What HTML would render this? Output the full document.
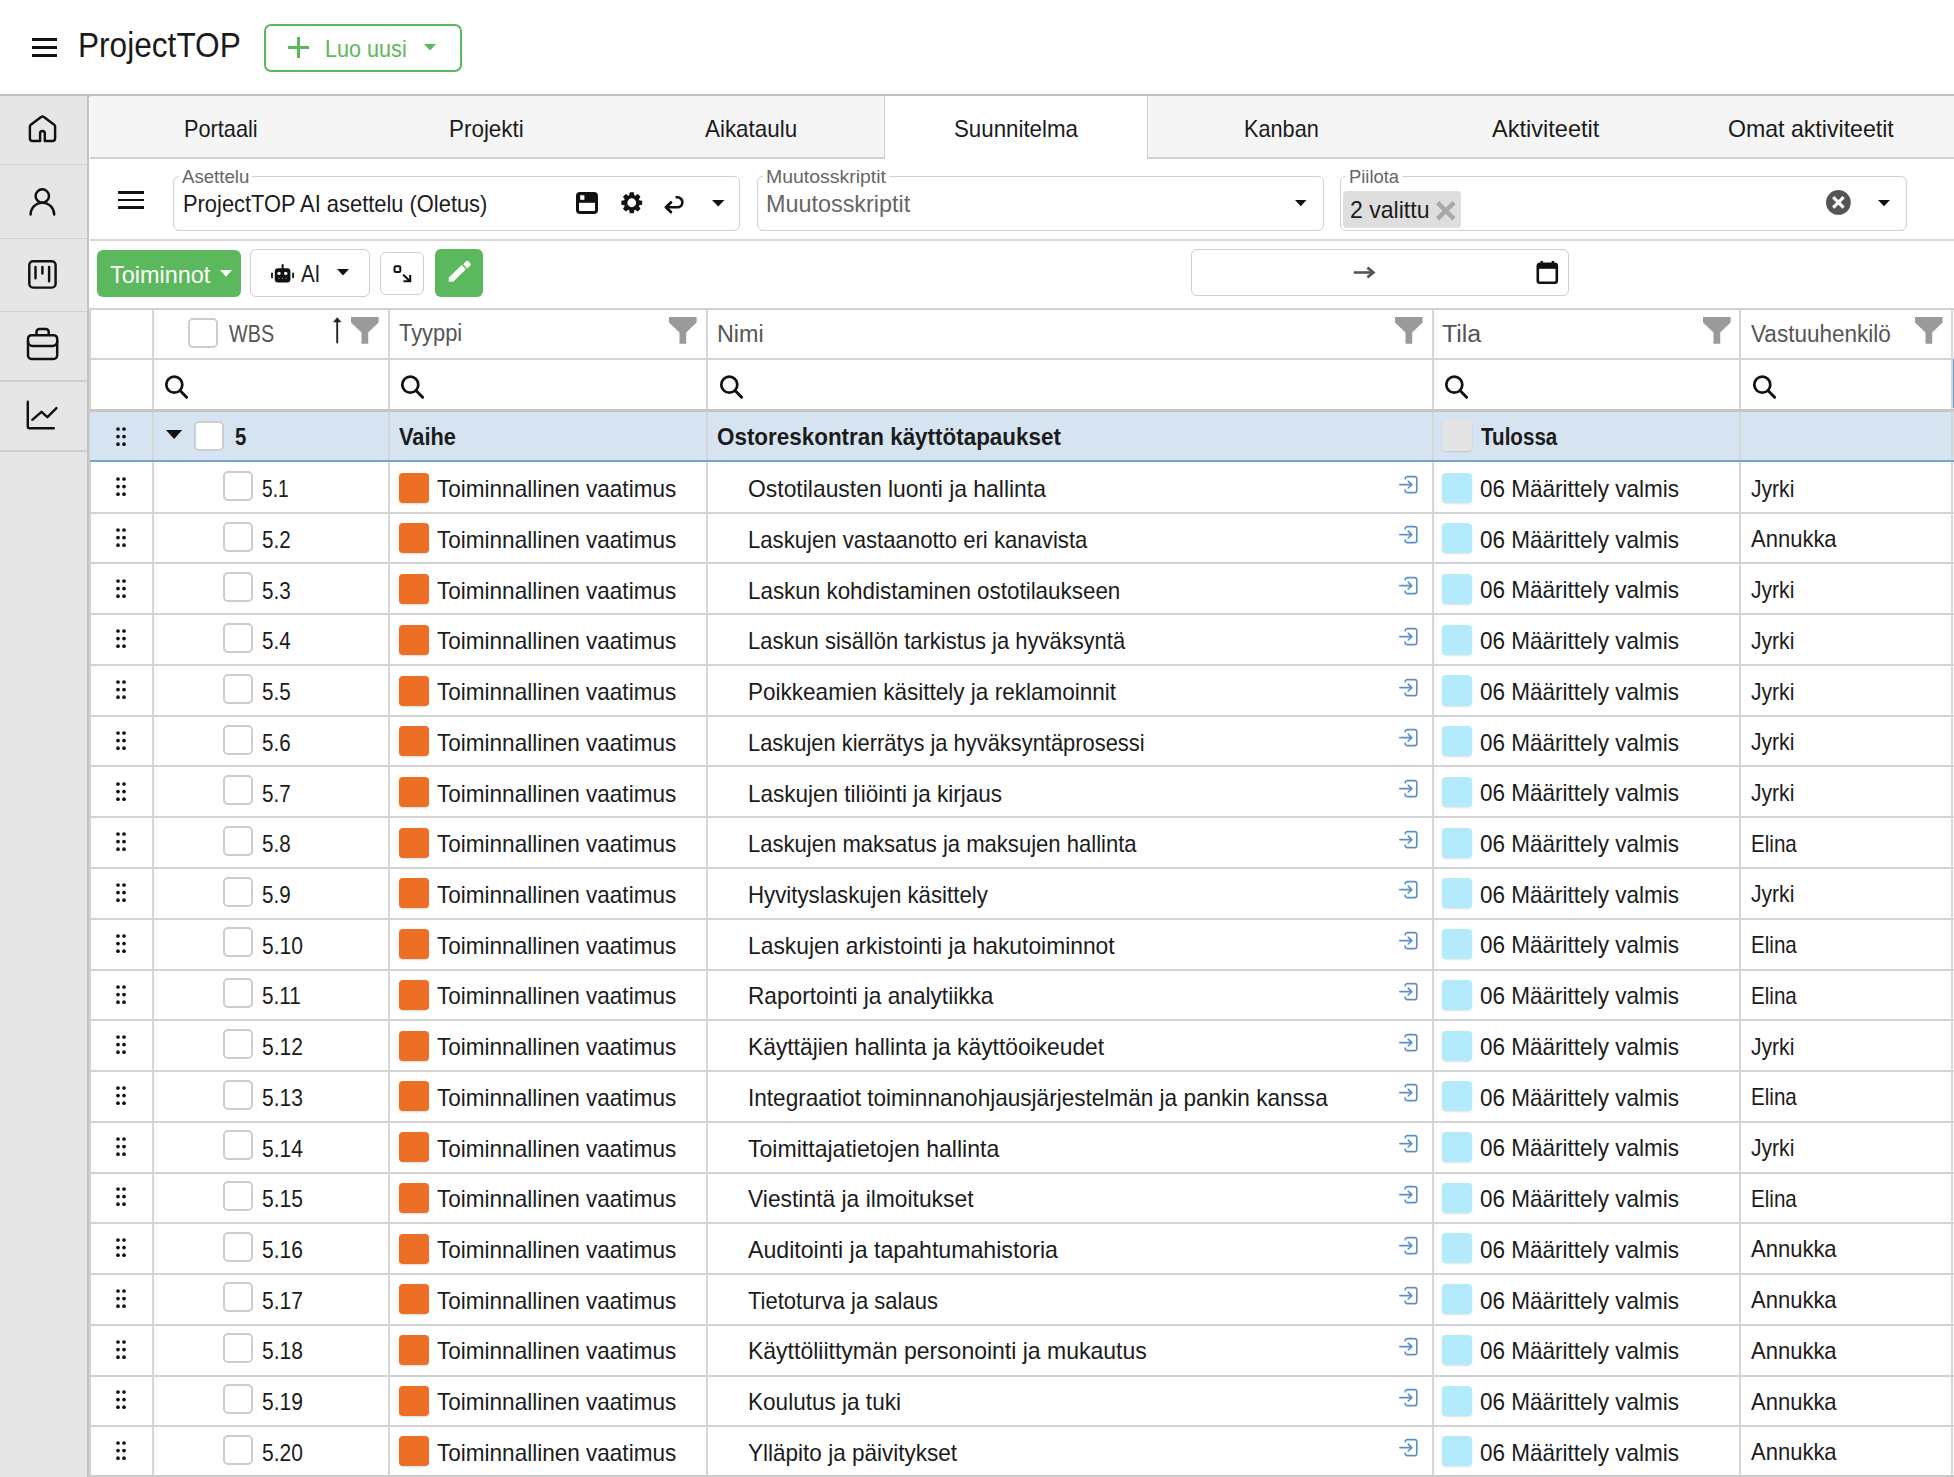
<!DOCTYPE html>
<html><head><meta charset="utf-8"><title>ProjectTOP</title>
<style>
html,body{margin:0;padding:0;}
body{width:1954px;height:1477px;position:relative;overflow:hidden;background:#fff;font-family:"Liberation Sans",sans-serif;}
.a{position:absolute;}
.t{position:absolute;white-space:nowrap;transform-origin:0 50%;}
svg{overflow:visible;}
</style></head><body>
<div class="a" style="left:31.50px;top:38.00px;width:25.50px;height:3.30px;background:#111;"></div>
<div class="a" style="left:31.50px;top:45.80px;width:25.50px;height:3.30px;background:#111;"></div>
<div class="a" style="left:31.50px;top:53.60px;width:25.50px;height:3.30px;background:#111;"></div>
<div class="t" style="left:77.50px;top:28.39px;font-size:34.5px;line-height:34.5px;color:#1b1b1b;transform:scaleX(0.9162);">ProjectTOP</div>
<div class="a" style="left:264.00px;top:24.00px;width:198.00px;height:48.00px;border:2px solid #5cb85c;border-radius:7px;box-sizing:border-box;"></div>
<div class="a" style="left:296.50px;top:36.50px;width:3.00px;height:21.00px;background:#5cb85c;"></div>
<div class="a" style="left:287.50px;top:45.50px;width:21.00px;height:3.00px;background:#5cb85c;"></div>
<div class="t" style="left:325.30px;top:37.28px;font-size:24px;line-height:24px;color:#5cb85c;transform:scaleX(0.9008);">Luo uusi</div>
<svg class="a" style="left:423.50px;top:43.50px" width="12" height="7" viewBox="0 0 12 7"><path d="M0 0H12L6 6.5Z" fill="#5cb85c"/></svg>
<div class="a" style="left:0.00px;top:94.00px;width:1954.00px;height:2.60px;background:#c0c0c0;"></div>
<div class="a" style="left:0.00px;top:96.20px;width:87.00px;height:1381.00px;background:#e6e6e6;"></div>
<div class="a" style="left:86.80px;top:96.20px;width:2.50px;height:1381.00px;background:#c4c4c4;"></div>
<div class="a" style="left:89.20px;top:308.00px;width:1.40px;height:1169.00px;background:#d2d2d2;"></div>
<div class="a" style="left:0.00px;top:163.50px;width:87.00px;height:1.60px;background:#cfcfcf;"></div>
<div class="a" style="left:0.00px;top:237.80px;width:87.00px;height:1.60px;background:#cfcfcf;"></div>
<div class="a" style="left:0.00px;top:310.50px;width:87.00px;height:1.60px;background:#cfcfcf;"></div>
<div class="a" style="left:0.00px;top:380.20px;width:87.00px;height:1.60px;background:#cfcfcf;"></div>
<div class="a" style="left:0.00px;top:450.00px;width:87.00px;height:1.60px;background:#cfcfcf;"></div>
<svg class="a" style="left:20.00px;top:105.00px" width="45" height="45" viewBox="0 0 45 45"><path fill="none" stroke="#111" stroke-width="2.45" stroke-linecap="round" stroke-linejoin="round" d="M20.1 36 V28.3 a2.35 2.35 0 0 1 4.7 0 V36 H32.3 a2.8 2.8 0 0 0 2.8 -2.8 V21.6 a2.2 2.2 0 0 0 -0.9 -1.8 L23.9 12.1 a2.2 2.2 0 0 0 -2.8 0 L10.8 19.8 a2.2 2.2 0 0 0 -0.9 1.8 V33.2 a2.8 2.8 0 0 0 2.8 2.8 Z"/></svg>
<svg class="a" style="left:20.00px;top:180.00px" width="45" height="45" viewBox="0 0 45 45"><circle cx="22.3" cy="16" r="6.7" fill="none" stroke="#111" stroke-width="2.45" stroke-linecap="round" stroke-linejoin="round"/><path fill="none" stroke="#111" stroke-width="2.45" stroke-linecap="round" stroke-linejoin="round" d="M10.6 34.5 A11.8 11.8 0 0 1 34.2 34.5"/></svg>
<svg class="a" style="left:20.00px;top:250.00px" width="45" height="45" viewBox="0 0 45 45"><rect x="9.3" y="11.3" width="26.3" height="26.3" rx="3.8" fill="none" stroke="#111" stroke-width="2.45" stroke-linecap="round" stroke-linejoin="round"/><path fill="none" stroke="#111" stroke-width="2.45" stroke-linecap="round" stroke-linejoin="round" d="M15.5 17V28.3 M22.4 17V23.5 M29.1 17V31.3"/></svg>
<svg class="a" style="left:20.00px;top:322.00px" width="45" height="45" viewBox="0 0 45 45"><path fill="none" stroke="#111" stroke-width="2.45" stroke-linecap="round" stroke-linejoin="round" d="M16.5 12 V9.8 a2.8 2.8 0 0 1 2.8 -2.8 H25.9 a2.8 2.8 0 0 1 2.8 2.8 V12"/><rect x="8" y="13.2" width="29.2" height="23.8" rx="3.5" fill="none" stroke="#111" stroke-width="2.45" stroke-linecap="round" stroke-linejoin="round"/><path fill="none" stroke="#111" stroke-width="2.45" stroke-linecap="round" stroke-linejoin="round" d="M8 19.5 a4.5 4.5 0 0 0 4.5 4.5 H32.7 a4.5 4.5 0 0 0 4.5 -4.5"/></svg>
<svg class="a" style="left:20.00px;top:393.00px" width="45" height="45" viewBox="0 0 45 45"><path fill="none" stroke="#111" stroke-width="2.45" stroke-linecap="round" stroke-linejoin="round" d="M7.8 8.8 V33.5 a1.8 1.8 0 0 0 1.8 1.8 H33.8"/><path fill="none" stroke="#111" stroke-width="2.45" stroke-linecap="round" stroke-linejoin="round" d="M12.3 26.8 L21.5 18.8 L27.4 24.1 L36.4 15.1"/></svg>
<div class="a" style="left:89.60px;top:96.20px;width:1864.40px;height:61.80px;background:#f5f5f5;"></div>
<div class="a" style="left:89.60px;top:157.20px;width:1864.40px;height:1.80px;background:#d2d2d2;"></div>
<div class="a" style="left:884.00px;top:96.20px;width:263.50px;height:63.00px;background:#fff;border-left:1.6px solid #d2d2d2;border-right:1.6px solid #d2d2d2;box-sizing:border-box;"></div>
<div class="t" style="left:183.80px;top:117.08px;font-size:24px;line-height:24px;color:#1b1b1b;transform:scaleX(0.9054);">Portaali</div>
<div class="t" style="left:448.90px;top:117.08px;font-size:24px;line-height:24px;color:#1b1b1b;transform:scaleX(0.9338);">Projekti</div>
<div class="t" style="left:704.60px;top:117.08px;font-size:24px;line-height:24px;color:#1b1b1b;transform:scaleX(0.9331);">Aikataulu</div>
<div class="t" style="left:953.50px;top:117.08px;font-size:24px;line-height:24px;color:#1b1b1b;transform:scaleX(0.9288);">Suunnitelma</div>
<div class="t" style="left:1243.50px;top:117.08px;font-size:24px;line-height:24px;color:#1b1b1b;transform:scaleX(0.9034);">Kanban</div>
<div class="t" style="left:1492.30px;top:117.08px;font-size:24px;line-height:24px;color:#1b1b1b;transform:scaleX(0.9817);">Aktiviteetit</div>
<div class="t" style="left:1728.00px;top:117.08px;font-size:24px;line-height:24px;color:#1b1b1b;transform:scaleX(0.9634);">Omat aktiviteetit</div>
<div class="a" style="left:89.60px;top:239.20px;width:1864.40px;height:1.70px;background:#d6d6d6;"></div>
<div class="a" style="left:118.00px;top:190.80px;width:25.50px;height:2.90px;background:#111;"></div>
<div class="a" style="left:118.00px;top:198.60px;width:25.50px;height:2.90px;background:#111;"></div>
<div class="a" style="left:118.00px;top:206.30px;width:25.50px;height:2.90px;background:#111;"></div>
<div class="a" style="left:173.00px;top:176.00px;width:567.00px;height:55.00px;border:1.5px solid #d0d0d0;border-radius:6px;box-sizing:border-box;"></div>
<div class="a" style="left:179.00px;top:172.00px;width:73.40px;height:8.00px;background:#fff;"></div>
<div class="t" style="left:182.00px;top:166.91px;font-size:19px;line-height:19px;color:#666;transform:scaleX(0.9811);">Asettelu</div>
<div class="a" style="left:756.50px;top:176.00px;width:567.00px;height:55.00px;border:1.5px solid #d0d0d0;border-radius:6px;box-sizing:border-box;"></div>
<div class="a" style="left:762.70px;top:172.00px;width:126.00px;height:8.00px;background:#fff;"></div>
<div class="t" style="left:765.70px;top:166.91px;font-size:19px;line-height:19px;color:#666;transform:scaleX(1.0239);">Muutosskriptit</div>
<div class="a" style="left:1339.60px;top:176.00px;width:567.20px;height:55.00px;border:1.5px solid #d0d0d0;border-radius:6px;box-sizing:border-box;"></div>
<div class="a" style="left:1346.00px;top:172.00px;width:56.00px;height:8.00px;background:#fff;"></div>
<div class="t" style="left:1349.00px;top:166.91px;font-size:19px;line-height:19px;color:#666;transform:scaleX(0.9653);">Piilota</div>
<div class="t" style="left:182.60px;top:191.78px;font-size:24px;line-height:24px;color:#1b1b1b;transform:scaleX(0.9114);">ProjectTOP AI asettelu (Oletus)</div>
<div class="t" style="left:765.70px;top:191.68px;font-size:24px;line-height:24px;color:#666;transform:scaleX(0.9743);">Muutosskriptit</div>
<svg class="a" style="left:576.00px;top:192.00px" width="22" height="22" viewBox="0 0 22 22"><rect x="1.5" y="1.5" width="19" height="19" rx="2.5" fill="none" stroke="#111" stroke-width="3"/><rect x="1.5" y="1.5" width="19" height="9.3" fill="#111"/><rect x="4.2" y="3.2" width="4.2" height="4.6" fill="#fff"/></svg>
<svg class="a" style="left:621.00px;top:192.30px" width="21.5" height="21.5" viewBox="0 0 21.5 21.5"><path d="M21.16 8.75 L21.16 12.75 L18.22 13.31 L17.84 14.22 L19.53 16.69 L16.69 19.53 L14.22 17.84 L13.31 18.22 L12.75 21.16 L8.75 21.16 L8.19 18.22 L7.28 17.84 L4.81 19.53 L1.97 16.69 L3.66 14.22 L3.28 13.31 L0.34 12.75 L0.34 8.75 L3.28 8.19 L3.66 7.28 L1.97 4.81 L4.81 1.97 L7.28 3.66 L8.19 3.28 L8.75 0.34 L12.75 0.34 L13.31 3.28 L14.22 3.66 L16.69 1.97 L19.53 4.81 L17.84 7.28 L18.22 8.19Z M15.15 10.75 A4.4 4.4 0 1 0 6.35 10.75 A4.4 4.4 0 1 0 15.15 10.75Z" fill="#111" fill-rule="evenodd"/></svg>
<svg class="a" style="left:663.00px;top:195.00px" width="24" height="20" viewBox="0 0 24 20"><path d="M3.4 12.3 H14.4 a5 5 0 0 0 0 -10 H13.6" fill="none" stroke="#111" stroke-width="2.6" stroke-linecap="round"/><path d="M7.9 7.5 L2.9 12.3 L7.9 17.1" fill="none" stroke="#111" stroke-width="2.8" stroke-linecap="round" stroke-linejoin="round"/></svg>
<svg class="a" style="left:711.80px;top:199.60px" width="12.5" height="7" viewBox="0 0 12.5 7"><path d="M0 0H12.5L6.25 6.4Z" fill="#111"/></svg>
<svg class="a" style="left:1295.00px;top:199.80px" width="11.5" height="6.5" viewBox="0 0 11.5 6.5"><path d="M0 0H11.5L5.75 6.2Z" fill="#111"/></svg>
<div class="a" style="left:1343.00px;top:191.20px;width:118.30px;height:36.50px;background:#dedede;border-radius:4px;"></div>
<div class="t" style="left:1349.50px;top:197.68px;font-size:24px;line-height:24px;color:#1b1b1b;transform:scaleX(0.9613);">2 valittu</div>
<svg class="a" style="left:1436.30px;top:200.80px" width="20" height="20" viewBox="0 0 20 20"><path d="M1.6 1.6L17.9 17.9M17.9 1.6L1.6 17.9" stroke="#a8a8a8" stroke-width="4.4" stroke-linecap="butt"/></svg>
<svg class="a" style="left:1826.10px;top:190.30px" width="25" height="25" viewBox="0 0 25 25"><circle cx="12.4" cy="12.4" r="12.4" fill="#555"/><path d="M7.2 7.2L17.6 17.6M17.6 7.2L7.2 17.6" stroke="#fff" stroke-width="3.2" stroke-linecap="butt"/></svg>
<svg class="a" style="left:1878.00px;top:199.50px" width="12" height="6.5" viewBox="0 0 12 6.5"><path d="M0 0H12L6 6.3Z" fill="#111"/></svg>
<div class="a" style="left:97.00px;top:250.00px;width:144.00px;height:47.00px;background:#5cb85c;border-radius:6px;"></div>
<div class="t" style="left:110.00px;top:263.18px;font-size:24px;line-height:24px;color:#fff;transform:scaleX(0.9766);">Toiminnot</div>
<svg class="a" style="left:220.00px;top:269.70px" width="12" height="7" viewBox="0 0 12 7"><path d="M0 0H12L6 6.8Z" fill="#fff"/></svg>
<div class="a" style="left:250.40px;top:249.00px;width:120.00px;height:47.60px;border:1.5px solid #cfcfcf;border-radius:6px;box-sizing:border-box;"></div>
<svg class="a" style="left:270.00px;top:263.00px" width="25" height="21" viewBox="0 0 25 21"><rect x="4.8" y="5.2" width="15.6" height="14.2" rx="3.2" fill="#111"/><rect x="11.6" y="1" width="2" height="5" rx="1" fill="#111"/><rect x="1.1" y="9.6" width="1.8" height="5.7" rx=".9" fill="#111"/><rect x="22.2" y="9.6" width="1.8" height="5.7" rx=".9" fill="#111"/><circle cx="9" cy="10.4" r="1.7" fill="#fff"/><circle cx="15.7" cy="10.4" r="1.7" fill="#fff"/><circle cx="9" cy="15.3" r=".7" fill="#888"/><circle cx="12.5" cy="15.3" r=".7" fill="#888"/><circle cx="16" cy="15.3" r=".7" fill="#888"/></svg>
<div class="t" style="left:301.20px;top:261.68px;font-size:24px;line-height:24px;color:#1b1b1b;transform:scaleX(0.8502);">AI</div>
<svg class="a" style="left:337.00px;top:269.30px" width="12" height="7" viewBox="0 0 12 7"><path d="M0 0H12L6 6.6Z" fill="#111"/></svg>
<div class="a" style="left:380.40px;top:251.70px;width:43.20px;height:43.10px;border:1.5px solid #cfcfcf;border-radius:6px;box-sizing:border-box;"></div>
<svg class="a" style="left:390.00px;top:262.00px" width="25" height="24" viewBox="0 0 25 24"><rect x="4.5" y="4.2" width="5.8" height="5.8" rx="1.2" fill="none" stroke="#111" stroke-width="2"/><path d="M13.8 13.2 L19.6 19" stroke="#111" stroke-width="2.1" stroke-linecap="round"/><path d="M13.5 19.3 H20.2 V13" fill="none" stroke="#111" stroke-width="2.1"/></svg>
<div class="a" style="left:435.00px;top:248.60px;width:48.00px;height:48.00px;background:#5cb85c;border-radius:6px;"></div>
<svg class="a" style="left:446.00px;top:259.00px" width="28" height="26" viewBox="0 0 28 26"><path d="M2.7 22.7 L2.9 18.4 L15.6 5.9 L19.9 10.2 L7.2 22.7 Z" fill="#fff"/><path d="M17.2 5.3 L20.4 2.1 a1.3 1.3 0 0 1 1.8 0 L24.5 4.4 a1.3 1.3 0 0 1 0 1.8 L21.3 9.4 Z" fill="#fff"/></svg>
<div class="a" style="left:1191.30px;top:248.60px;width:377.70px;height:47.70px;border:1.5px solid #cfcfcf;border-radius:6px;box-sizing:border-box;"></div>
<svg class="a" style="left:1352.00px;top:265.00px" width="25" height="15" viewBox="0 0 25 15"><path d="M1.8 7.5H20" stroke="#555" stroke-width="2.6"/><path d="M15.4 2.6L21.4 7.5L15.4 12.4" fill="none" stroke="#555" stroke-width="2.7" stroke-linejoin="miter"/></svg>
<svg class="a" style="left:1535.00px;top:259.50px" width="25" height="25" viewBox="0 0 25 25"><rect x="2.8" y="3.8" width="19" height="19" rx="2" fill="none" stroke="#111" stroke-width="2.6"/><rect x="2.8" y="3.8" width="19" height="5" fill="#111"/><rect x="5.5" y="1" width="2.4" height="4" fill="#111"/><rect x="16.7" y="1" width="2.4" height="4" fill="#111"/></svg>
<div class="a" style="left:89.60px;top:308.00px;width:1864.40px;height:2.00px;background:#d2d2d2;"></div>
<div class="a" style="left:89.60px;top:411.00px;width:1864.40px;height:50.00px;background:#d6e4f1;"></div>
<div class="a" style="left:152.00px;top:308.00px;width:2.00px;height:1169.00px;background:#d6d6d6;"></div>
<div class="a" style="left:388.00px;top:308.00px;width:2.00px;height:1169.00px;background:#d6d6d6;"></div>
<div class="a" style="left:706.00px;top:308.00px;width:2.00px;height:1169.00px;background:#d6d6d6;"></div>
<div class="a" style="left:1432.00px;top:308.00px;width:2.00px;height:1169.00px;background:#d6d6d6;"></div>
<div class="a" style="left:1739.00px;top:308.00px;width:2.00px;height:1169.00px;background:#d6d6d6;"></div>
<div class="a" style="left:1951.00px;top:308.00px;width:2.00px;height:1169.00px;background:#d6d6d6;"></div>
<div class="a" style="left:89.60px;top:358.00px;width:1864.40px;height:2.00px;background:#d2d2d2;"></div>
<div class="a" style="left:89.60px;top:409.00px;width:1864.40px;height:3.00px;background:#c6c6c6;"></div>
<div class="a" style="left:89.60px;top:460.00px;width:1864.40px;height:2.00px;background:#76a4d2;"></div>
<div class="a" style="left:1952.60px;top:359.00px;width:1.60px;height:49.00px;background:#6a9bd0;"></div>
<div class="a" style="left:89.60px;top:512.00px;width:1864.40px;height:2.00px;background:#d2d2d2;"></div>
<div class="a" style="left:89.60px;top:562.00px;width:1864.40px;height:2.00px;background:#d2d2d2;"></div>
<div class="a" style="left:89.60px;top:613.00px;width:1864.40px;height:2.00px;background:#d2d2d2;"></div>
<div class="a" style="left:89.60px;top:664.00px;width:1864.40px;height:2.00px;background:#d2d2d2;"></div>
<div class="a" style="left:89.60px;top:715.00px;width:1864.40px;height:2.00px;background:#d2d2d2;"></div>
<div class="a" style="left:89.60px;top:765.00px;width:1864.40px;height:2.00px;background:#d2d2d2;"></div>
<div class="a" style="left:89.60px;top:816.00px;width:1864.40px;height:2.00px;background:#d2d2d2;"></div>
<div class="a" style="left:89.60px;top:867.00px;width:1864.40px;height:2.00px;background:#d2d2d2;"></div>
<div class="a" style="left:89.60px;top:918.00px;width:1864.40px;height:2.00px;background:#d2d2d2;"></div>
<div class="a" style="left:89.60px;top:969.00px;width:1864.40px;height:2.00px;background:#d2d2d2;"></div>
<div class="a" style="left:89.60px;top:1019.00px;width:1864.40px;height:2.00px;background:#d2d2d2;"></div>
<div class="a" style="left:89.60px;top:1070.00px;width:1864.40px;height:2.00px;background:#d2d2d2;"></div>
<div class="a" style="left:89.60px;top:1121.00px;width:1864.40px;height:2.00px;background:#d2d2d2;"></div>
<div class="a" style="left:89.60px;top:1172.00px;width:1864.40px;height:2.00px;background:#d2d2d2;"></div>
<div class="a" style="left:89.60px;top:1222.00px;width:1864.40px;height:2.00px;background:#d2d2d2;"></div>
<div class="a" style="left:89.60px;top:1273.00px;width:1864.40px;height:2.00px;background:#d2d2d2;"></div>
<div class="a" style="left:89.60px;top:1324.00px;width:1864.40px;height:2.00px;background:#d2d2d2;"></div>
<div class="a" style="left:89.60px;top:1375.00px;width:1864.40px;height:2.00px;background:#d2d2d2;"></div>
<div class="a" style="left:89.60px;top:1425.00px;width:1864.40px;height:2.00px;background:#d2d2d2;"></div>
<div class="a" style="left:89.60px;top:1475.00px;width:1864.40px;height:2.00px;background:#cbcbcb;"></div>
<div class="a" style="left:188.20px;top:318.00px;width:30.00px;height:30.00px;background:#fff;border:2.2px solid #cdcdcd;border-radius:5px;box-sizing:border-box;"></div>
<div class="t" style="left:228.50px;top:322.73px;font-size:23px;line-height:23px;color:#555;transform:scaleX(0.8607);">WBS</div>
<svg class="a" style="left:330.00px;top:316.00px" width="14" height="29" viewBox="0 0 14 29"><path d="M7.2 6 V27.3" stroke="#222" stroke-width="1.9"/><path d="M3 6.3 L7.2 1.2 L11.5 6.3 Z" fill="#222"/></svg>
<svg class="a" style="left:351.10px;top:316.60px" width="28" height="27" viewBox="0 0 28 27"><path d="M0 0 H27.6 V5.4 L17.2 15.5 V26.7 H10.5 V15.5 L0 5.4 Z" fill="#9a9a9a"/></svg>
<svg class="a" style="left:669.40px;top:316.60px" width="28" height="27" viewBox="0 0 28 27"><path d="M0 0 H27.6 V5.4 L17.2 15.5 V26.7 H10.5 V15.5 L0 5.4 Z" fill="#9a9a9a"/></svg>
<svg class="a" style="left:1394.90px;top:316.60px" width="28" height="27" viewBox="0 0 28 27"><path d="M0 0 H27.6 V5.4 L17.2 15.5 V26.7 H10.5 V15.5 L0 5.4 Z" fill="#9a9a9a"/></svg>
<svg class="a" style="left:1703.20px;top:316.60px" width="28" height="27" viewBox="0 0 28 27"><path d="M0 0 H27.6 V5.4 L17.2 15.5 V26.7 H10.5 V15.5 L0 5.4 Z" fill="#9a9a9a"/></svg>
<svg class="a" style="left:1914.90px;top:316.60px" width="28" height="27" viewBox="0 0 28 27"><path d="M0 0 H27.6 V5.4 L17.2 15.5 V26.7 H10.5 V15.5 L0 5.4 Z" fill="#9a9a9a"/></svg>
<div class="t" style="left:399.40px;top:322.33px;font-size:23px;line-height:23px;color:#555;transform:scaleX(0.9504);">Tyyppi</div>
<div class="t" style="left:716.80px;top:322.73px;font-size:23px;line-height:23px;color:#555;transform:scaleX(1.0152);">Nimi</div>
<div class="t" style="left:1442.30px;top:323.13px;font-size:23px;line-height:23px;color:#555;transform:scaleX(1.0829);">Tila</div>
<div class="t" style="left:1750.70px;top:322.93px;font-size:23px;line-height:23px;color:#555;transform:scaleX(0.9797);">Vastuuhenkilö</div>
<svg class="a" style="left:164.80px;top:375.80px" width="24" height="24" viewBox="0 0 24 24"><circle cx="9.3" cy="8.7" r="8.0" fill="none" stroke="#111" stroke-width="2.7"/><path d="M15.2 14.8 L21.6 21.2" stroke="#111" stroke-width="3" stroke-linecap="round"/></svg>
<svg class="a" style="left:401.40px;top:375.80px" width="24" height="24" viewBox="0 0 24 24"><circle cx="9.3" cy="8.7" r="8.0" fill="none" stroke="#111" stroke-width="2.7"/><path d="M15.2 14.8 L21.6 21.2" stroke="#111" stroke-width="3" stroke-linecap="round"/></svg>
<svg class="a" style="left:719.80px;top:375.80px" width="24" height="24" viewBox="0 0 24 24"><circle cx="9.3" cy="8.7" r="8.0" fill="none" stroke="#111" stroke-width="2.7"/><path d="M15.2 14.8 L21.6 21.2" stroke="#111" stroke-width="3" stroke-linecap="round"/></svg>
<svg class="a" style="left:1444.80px;top:375.80px" width="24" height="24" viewBox="0 0 24 24"><circle cx="9.3" cy="8.7" r="8.0" fill="none" stroke="#111" stroke-width="2.7"/><path d="M15.2 14.8 L21.6 21.2" stroke="#111" stroke-width="3" stroke-linecap="round"/></svg>
<svg class="a" style="left:1753.20px;top:375.80px" width="24" height="24" viewBox="0 0 24 24"><circle cx="9.3" cy="8.7" r="8.0" fill="none" stroke="#111" stroke-width="2.7"/><path d="M15.2 14.8 L21.6 21.2" stroke="#111" stroke-width="3" stroke-linecap="round"/></svg>
<svg class="a" style="left:116.30px;top:426.80px" width="10" height="20" viewBox="0 0 10 20"><circle cx="2" cy="2.0" r="1.85" fill="#111"/><circle cx="8" cy="2.0" r="1.85" fill="#111"/><circle cx="2" cy="9.6" r="1.85" fill="#111"/><circle cx="8" cy="9.6" r="1.85" fill="#111"/><circle cx="2" cy="17.2" r="1.85" fill="#111"/><circle cx="8" cy="17.2" r="1.85" fill="#111"/></svg>
<svg class="a" style="left:165.60px;top:429.80px" width="16.2" height="9" viewBox="0 0 16.2 9"><path d="M0 0H16.2L8.1 8.9Z" fill="#111"/></svg>
<div class="a" style="left:193.80px;top:421.20px;width:30.00px;height:30.00px;background:#fff;border:2.2px solid #cdcdcd;border-radius:5px;box-sizing:border-box;"></div>
<div class="t" style="left:234.60px;top:425.63px;font-size:23px;line-height:23px;color:#1b1b1b;font-weight:bold;transform:scaleX(0.8828);">5</div>
<div class="t" style="left:399.40px;top:425.53px;font-size:23px;line-height:23px;color:#1b1b1b;font-weight:bold;transform:scaleX(0.9484);">Vaihe</div>
<div class="t" style="left:717.40px;top:425.73px;font-size:23px;line-height:23px;color:#1b1b1b;font-weight:bold;transform:scaleX(0.9748);">Ostoreskontran käyttötapaukset</div>
<div class="a" style="left:1441.70px;top:420.40px;width:30.80px;height:30.90px;background:#e4e4e4;border-radius:4px;box-shadow:0 1px 2px rgba(0,0,0,.12);"></div>
<div class="t" style="left:1480.50px;top:425.73px;font-size:23px;line-height:23px;color:#1b1b1b;font-weight:bold;transform:scaleX(0.8958);">Tulossa</div>
<svg class="a" style="left:116.30px;top:477.30px" width="10" height="20" viewBox="0 0 10 20"><circle cx="2" cy="2.0" r="1.85" fill="#111"/><circle cx="8" cy="2.0" r="1.85" fill="#111"/><circle cx="2" cy="9.6" r="1.85" fill="#111"/><circle cx="8" cy="9.6" r="1.85" fill="#111"/><circle cx="2" cy="17.2" r="1.85" fill="#111"/><circle cx="8" cy="17.2" r="1.85" fill="#111"/></svg>
<div class="a" style="left:222.90px;top:470.90px;width:30.00px;height:30.00px;background:#fff;border:2.2px solid #cdcdcd;border-radius:5px;box-sizing:border-box;"></div>
<div class="t" style="left:262.40px;top:477.18px;font-size:24px;line-height:24px;color:#1b1b1b;transform:scaleX(0.7964);">5.1</div>
<div class="a" style="left:398.50px;top:472.70px;width:30.10px;height:30.00px;background:#ed6e25;border-radius:4px;box-shadow:0 1px 2px rgba(0,0,0,.15);"></div>
<div class="t" style="left:437.40px;top:477.18px;font-size:24px;line-height:24px;color:#1b1b1b;transform:scaleX(0.9388);">Toiminnallinen vaatimus</div>
<div class="t" style="left:747.50px;top:477.18px;font-size:24px;line-height:24px;color:#1b1b1b;transform:scaleX(0.9542);">Ostotilausten luonti ja hallinta</div>
<svg class="a" style="left:1399.20px;top:475.70px" width="20" height="18" viewBox="0 0 20 18"><path d="M6.2 3.6 V2.8 a2.2 2.2 0 0 1 2.2 -2.2 H15.6 a2.2 2.2 0 0 1 2.2 2.2 V14.4 a2.2 2.2 0 0 1 -2.2 2.2 H8.4 a2.2 2.2 0 0 1 -2.2 -2.2 V13.6" fill="none" stroke="#5b8fc9" stroke-width="1.6"/><path d="M0.8 8.6 H12.6 M9.2 5.2 L12.8 8.6 L9.2 12" fill="none" stroke="#5b8fc9" stroke-width="1.6" stroke-linecap="round" stroke-linejoin="round"/></svg>
<div class="a" style="left:1442.30px;top:472.60px;width:29.80px;height:30.10px;background:#b4ebfc;border-radius:4px;box-shadow:0 1px 2px rgba(0,0,0,.12);"></div>
<div class="t" style="left:1480.00px;top:476.98px;font-size:24px;line-height:24px;color:#1b1b1b;transform:scaleX(0.9382);">06 Määrittely valmis</div>
<div class="t" style="left:1750.70px;top:476.68px;font-size:24px;line-height:24px;color:#1b1b1b;transform:scaleX(0.8783);">Jyrki</div>
<svg class="a" style="left:116.30px;top:528.02px" width="10" height="20" viewBox="0 0 10 20"><circle cx="2" cy="2.0" r="1.85" fill="#111"/><circle cx="8" cy="2.0" r="1.85" fill="#111"/><circle cx="2" cy="9.6" r="1.85" fill="#111"/><circle cx="8" cy="9.6" r="1.85" fill="#111"/><circle cx="2" cy="17.2" r="1.85" fill="#111"/><circle cx="8" cy="17.2" r="1.85" fill="#111"/></svg>
<div class="a" style="left:222.90px;top:521.62px;width:30.00px;height:30.00px;background:#fff;border:2.2px solid #cdcdcd;border-radius:5px;box-sizing:border-box;"></div>
<div class="t" style="left:262.40px;top:527.90px;font-size:24px;line-height:24px;color:#1b1b1b;transform:scaleX(0.8593);">5.2</div>
<div class="a" style="left:398.50px;top:523.42px;width:30.10px;height:30.00px;background:#ed6e25;border-radius:4px;box-shadow:0 1px 2px rgba(0,0,0,.15);"></div>
<div class="t" style="left:437.40px;top:527.90px;font-size:24px;line-height:24px;color:#1b1b1b;transform:scaleX(0.9388);">Toiminnallinen vaatimus</div>
<div class="t" style="left:747.50px;top:527.90px;font-size:24px;line-height:24px;color:#1b1b1b;transform:scaleX(0.9215);">Laskujen vastaanotto eri kanavista</div>
<svg class="a" style="left:1399.20px;top:526.42px" width="20" height="18" viewBox="0 0 20 18"><path d="M6.2 3.6 V2.8 a2.2 2.2 0 0 1 2.2 -2.2 H15.6 a2.2 2.2 0 0 1 2.2 2.2 V14.4 a2.2 2.2 0 0 1 -2.2 2.2 H8.4 a2.2 2.2 0 0 1 -2.2 -2.2 V13.6" fill="none" stroke="#5b8fc9" stroke-width="1.6"/><path d="M0.8 8.6 H12.6 M9.2 5.2 L12.8 8.6 L9.2 12" fill="none" stroke="#5b8fc9" stroke-width="1.6" stroke-linecap="round" stroke-linejoin="round"/></svg>
<div class="a" style="left:1442.30px;top:523.32px;width:29.80px;height:30.10px;background:#b4ebfc;border-radius:4px;box-shadow:0 1px 2px rgba(0,0,0,.12);"></div>
<div class="t" style="left:1480.00px;top:527.70px;font-size:24px;line-height:24px;color:#1b1b1b;transform:scaleX(0.9382);">06 Määrittely valmis</div>
<div class="t" style="left:1750.70px;top:527.40px;font-size:24px;line-height:24px;color:#1b1b1b;transform:scaleX(0.9166);">Annukka</div>
<svg class="a" style="left:116.30px;top:578.74px" width="10" height="20" viewBox="0 0 10 20"><circle cx="2" cy="2.0" r="1.85" fill="#111"/><circle cx="8" cy="2.0" r="1.85" fill="#111"/><circle cx="2" cy="9.6" r="1.85" fill="#111"/><circle cx="8" cy="9.6" r="1.85" fill="#111"/><circle cx="2" cy="17.2" r="1.85" fill="#111"/><circle cx="8" cy="17.2" r="1.85" fill="#111"/></svg>
<div class="a" style="left:222.90px;top:572.34px;width:30.00px;height:30.00px;background:#fff;border:2.2px solid #cdcdcd;border-radius:5px;box-sizing:border-box;"></div>
<div class="t" style="left:262.40px;top:578.62px;font-size:24px;line-height:24px;color:#1b1b1b;transform:scaleX(0.8593);">5.3</div>
<div class="a" style="left:398.50px;top:574.14px;width:30.10px;height:30.00px;background:#ed6e25;border-radius:4px;box-shadow:0 1px 2px rgba(0,0,0,.15);"></div>
<div class="t" style="left:437.40px;top:578.62px;font-size:24px;line-height:24px;color:#1b1b1b;transform:scaleX(0.9388);">Toiminnallinen vaatimus</div>
<div class="t" style="left:747.50px;top:578.62px;font-size:24px;line-height:24px;color:#1b1b1b;transform:scaleX(0.9333);">Laskun kohdistaminen ostotilaukseen</div>
<svg class="a" style="left:1399.20px;top:577.14px" width="20" height="18" viewBox="0 0 20 18"><path d="M6.2 3.6 V2.8 a2.2 2.2 0 0 1 2.2 -2.2 H15.6 a2.2 2.2 0 0 1 2.2 2.2 V14.4 a2.2 2.2 0 0 1 -2.2 2.2 H8.4 a2.2 2.2 0 0 1 -2.2 -2.2 V13.6" fill="none" stroke="#5b8fc9" stroke-width="1.6"/><path d="M0.8 8.6 H12.6 M9.2 5.2 L12.8 8.6 L9.2 12" fill="none" stroke="#5b8fc9" stroke-width="1.6" stroke-linecap="round" stroke-linejoin="round"/></svg>
<div class="a" style="left:1442.30px;top:574.04px;width:29.80px;height:30.10px;background:#b4ebfc;border-radius:4px;box-shadow:0 1px 2px rgba(0,0,0,.12);"></div>
<div class="t" style="left:1480.00px;top:578.42px;font-size:24px;line-height:24px;color:#1b1b1b;transform:scaleX(0.9382);">06 Määrittely valmis</div>
<div class="t" style="left:1750.70px;top:578.12px;font-size:24px;line-height:24px;color:#1b1b1b;transform:scaleX(0.8783);">Jyrki</div>
<svg class="a" style="left:116.30px;top:629.46px" width="10" height="20" viewBox="0 0 10 20"><circle cx="2" cy="2.0" r="1.85" fill="#111"/><circle cx="8" cy="2.0" r="1.85" fill="#111"/><circle cx="2" cy="9.6" r="1.85" fill="#111"/><circle cx="8" cy="9.6" r="1.85" fill="#111"/><circle cx="2" cy="17.2" r="1.85" fill="#111"/><circle cx="8" cy="17.2" r="1.85" fill="#111"/></svg>
<div class="a" style="left:222.90px;top:623.06px;width:30.00px;height:30.00px;background:#fff;border:2.2px solid #cdcdcd;border-radius:5px;box-sizing:border-box;"></div>
<div class="t" style="left:262.40px;top:629.34px;font-size:24px;line-height:24px;color:#1b1b1b;transform:scaleX(0.8593);">5.4</div>
<div class="a" style="left:398.50px;top:624.86px;width:30.10px;height:30.00px;background:#ed6e25;border-radius:4px;box-shadow:0 1px 2px rgba(0,0,0,.15);"></div>
<div class="t" style="left:437.40px;top:629.34px;font-size:24px;line-height:24px;color:#1b1b1b;transform:scaleX(0.9388);">Toiminnallinen vaatimus</div>
<div class="t" style="left:747.50px;top:629.34px;font-size:24px;line-height:24px;color:#1b1b1b;transform:scaleX(0.9149);">Laskun sisällön tarkistus ja hyväksyntä</div>
<svg class="a" style="left:1399.20px;top:627.86px" width="20" height="18" viewBox="0 0 20 18"><path d="M6.2 3.6 V2.8 a2.2 2.2 0 0 1 2.2 -2.2 H15.6 a2.2 2.2 0 0 1 2.2 2.2 V14.4 a2.2 2.2 0 0 1 -2.2 2.2 H8.4 a2.2 2.2 0 0 1 -2.2 -2.2 V13.6" fill="none" stroke="#5b8fc9" stroke-width="1.6"/><path d="M0.8 8.6 H12.6 M9.2 5.2 L12.8 8.6 L9.2 12" fill="none" stroke="#5b8fc9" stroke-width="1.6" stroke-linecap="round" stroke-linejoin="round"/></svg>
<div class="a" style="left:1442.30px;top:624.76px;width:29.80px;height:30.10px;background:#b4ebfc;border-radius:4px;box-shadow:0 1px 2px rgba(0,0,0,.12);"></div>
<div class="t" style="left:1480.00px;top:629.14px;font-size:24px;line-height:24px;color:#1b1b1b;transform:scaleX(0.9382);">06 Määrittely valmis</div>
<div class="t" style="left:1750.70px;top:628.84px;font-size:24px;line-height:24px;color:#1b1b1b;transform:scaleX(0.8783);">Jyrki</div>
<svg class="a" style="left:116.30px;top:680.18px" width="10" height="20" viewBox="0 0 10 20"><circle cx="2" cy="2.0" r="1.85" fill="#111"/><circle cx="8" cy="2.0" r="1.85" fill="#111"/><circle cx="2" cy="9.6" r="1.85" fill="#111"/><circle cx="8" cy="9.6" r="1.85" fill="#111"/><circle cx="2" cy="17.2" r="1.85" fill="#111"/><circle cx="8" cy="17.2" r="1.85" fill="#111"/></svg>
<div class="a" style="left:222.90px;top:673.78px;width:30.00px;height:30.00px;background:#fff;border:2.2px solid #cdcdcd;border-radius:5px;box-sizing:border-box;"></div>
<div class="t" style="left:262.40px;top:680.06px;font-size:24px;line-height:24px;color:#1b1b1b;transform:scaleX(0.8593);">5.5</div>
<div class="a" style="left:398.50px;top:675.58px;width:30.10px;height:30.00px;background:#ed6e25;border-radius:4px;box-shadow:0 1px 2px rgba(0,0,0,.15);"></div>
<div class="t" style="left:437.40px;top:680.06px;font-size:24px;line-height:24px;color:#1b1b1b;transform:scaleX(0.9388);">Toiminnallinen vaatimus</div>
<div class="t" style="left:747.50px;top:680.06px;font-size:24px;line-height:24px;color:#1b1b1b;transform:scaleX(0.9386);">Poikkeamien käsittely ja reklamoinnit</div>
<svg class="a" style="left:1399.20px;top:678.58px" width="20" height="18" viewBox="0 0 20 18"><path d="M6.2 3.6 V2.8 a2.2 2.2 0 0 1 2.2 -2.2 H15.6 a2.2 2.2 0 0 1 2.2 2.2 V14.4 a2.2 2.2 0 0 1 -2.2 2.2 H8.4 a2.2 2.2 0 0 1 -2.2 -2.2 V13.6" fill="none" stroke="#5b8fc9" stroke-width="1.6"/><path d="M0.8 8.6 H12.6 M9.2 5.2 L12.8 8.6 L9.2 12" fill="none" stroke="#5b8fc9" stroke-width="1.6" stroke-linecap="round" stroke-linejoin="round"/></svg>
<div class="a" style="left:1442.30px;top:675.48px;width:29.80px;height:30.10px;background:#b4ebfc;border-radius:4px;box-shadow:0 1px 2px rgba(0,0,0,.12);"></div>
<div class="t" style="left:1480.00px;top:679.86px;font-size:24px;line-height:24px;color:#1b1b1b;transform:scaleX(0.9382);">06 Määrittely valmis</div>
<div class="t" style="left:1750.70px;top:679.56px;font-size:24px;line-height:24px;color:#1b1b1b;transform:scaleX(0.8783);">Jyrki</div>
<svg class="a" style="left:116.30px;top:730.90px" width="10" height="20" viewBox="0 0 10 20"><circle cx="2" cy="2.0" r="1.85" fill="#111"/><circle cx="8" cy="2.0" r="1.85" fill="#111"/><circle cx="2" cy="9.6" r="1.85" fill="#111"/><circle cx="8" cy="9.6" r="1.85" fill="#111"/><circle cx="2" cy="17.2" r="1.85" fill="#111"/><circle cx="8" cy="17.2" r="1.85" fill="#111"/></svg>
<div class="a" style="left:222.90px;top:724.50px;width:30.00px;height:30.00px;background:#fff;border:2.2px solid #cdcdcd;border-radius:5px;box-sizing:border-box;"></div>
<div class="t" style="left:262.40px;top:730.78px;font-size:24px;line-height:24px;color:#1b1b1b;transform:scaleX(0.8593);">5.6</div>
<div class="a" style="left:398.50px;top:726.30px;width:30.10px;height:30.00px;background:#ed6e25;border-radius:4px;box-shadow:0 1px 2px rgba(0,0,0,.15);"></div>
<div class="t" style="left:437.40px;top:730.78px;font-size:24px;line-height:24px;color:#1b1b1b;transform:scaleX(0.9388);">Toiminnallinen vaatimus</div>
<div class="t" style="left:747.50px;top:730.78px;font-size:24px;line-height:24px;color:#1b1b1b;transform:scaleX(0.9119);">Laskujen kierrätys ja hyväksyntäprosessi</div>
<svg class="a" style="left:1399.20px;top:729.30px" width="20" height="18" viewBox="0 0 20 18"><path d="M6.2 3.6 V2.8 a2.2 2.2 0 0 1 2.2 -2.2 H15.6 a2.2 2.2 0 0 1 2.2 2.2 V14.4 a2.2 2.2 0 0 1 -2.2 2.2 H8.4 a2.2 2.2 0 0 1 -2.2 -2.2 V13.6" fill="none" stroke="#5b8fc9" stroke-width="1.6"/><path d="M0.8 8.6 H12.6 M9.2 5.2 L12.8 8.6 L9.2 12" fill="none" stroke="#5b8fc9" stroke-width="1.6" stroke-linecap="round" stroke-linejoin="round"/></svg>
<div class="a" style="left:1442.30px;top:726.20px;width:29.80px;height:30.10px;background:#b4ebfc;border-radius:4px;box-shadow:0 1px 2px rgba(0,0,0,.12);"></div>
<div class="t" style="left:1480.00px;top:730.58px;font-size:24px;line-height:24px;color:#1b1b1b;transform:scaleX(0.9382);">06 Määrittely valmis</div>
<div class="t" style="left:1750.70px;top:730.28px;font-size:24px;line-height:24px;color:#1b1b1b;transform:scaleX(0.8783);">Jyrki</div>
<svg class="a" style="left:116.30px;top:781.62px" width="10" height="20" viewBox="0 0 10 20"><circle cx="2" cy="2.0" r="1.85" fill="#111"/><circle cx="8" cy="2.0" r="1.85" fill="#111"/><circle cx="2" cy="9.6" r="1.85" fill="#111"/><circle cx="8" cy="9.6" r="1.85" fill="#111"/><circle cx="2" cy="17.2" r="1.85" fill="#111"/><circle cx="8" cy="17.2" r="1.85" fill="#111"/></svg>
<div class="a" style="left:222.90px;top:775.22px;width:30.00px;height:30.00px;background:#fff;border:2.2px solid #cdcdcd;border-radius:5px;box-sizing:border-box;"></div>
<div class="t" style="left:262.40px;top:781.50px;font-size:24px;line-height:24px;color:#1b1b1b;transform:scaleX(0.8593);">5.7</div>
<div class="a" style="left:398.50px;top:777.02px;width:30.10px;height:30.00px;background:#ed6e25;border-radius:4px;box-shadow:0 1px 2px rgba(0,0,0,.15);"></div>
<div class="t" style="left:437.40px;top:781.50px;font-size:24px;line-height:24px;color:#1b1b1b;transform:scaleX(0.9388);">Toiminnallinen vaatimus</div>
<div class="t" style="left:747.50px;top:781.50px;font-size:24px;line-height:24px;color:#1b1b1b;transform:scaleX(0.938);">Laskujen tiliöinti ja kirjaus</div>
<svg class="a" style="left:1399.20px;top:780.02px" width="20" height="18" viewBox="0 0 20 18"><path d="M6.2 3.6 V2.8 a2.2 2.2 0 0 1 2.2 -2.2 H15.6 a2.2 2.2 0 0 1 2.2 2.2 V14.4 a2.2 2.2 0 0 1 -2.2 2.2 H8.4 a2.2 2.2 0 0 1 -2.2 -2.2 V13.6" fill="none" stroke="#5b8fc9" stroke-width="1.6"/><path d="M0.8 8.6 H12.6 M9.2 5.2 L12.8 8.6 L9.2 12" fill="none" stroke="#5b8fc9" stroke-width="1.6" stroke-linecap="round" stroke-linejoin="round"/></svg>
<div class="a" style="left:1442.30px;top:776.92px;width:29.80px;height:30.10px;background:#b4ebfc;border-radius:4px;box-shadow:0 1px 2px rgba(0,0,0,.12);"></div>
<div class="t" style="left:1480.00px;top:781.30px;font-size:24px;line-height:24px;color:#1b1b1b;transform:scaleX(0.9382);">06 Määrittely valmis</div>
<div class="t" style="left:1750.70px;top:781.00px;font-size:24px;line-height:24px;color:#1b1b1b;transform:scaleX(0.8783);">Jyrki</div>
<svg class="a" style="left:116.30px;top:832.34px" width="10" height="20" viewBox="0 0 10 20"><circle cx="2" cy="2.0" r="1.85" fill="#111"/><circle cx="8" cy="2.0" r="1.85" fill="#111"/><circle cx="2" cy="9.6" r="1.85" fill="#111"/><circle cx="8" cy="9.6" r="1.85" fill="#111"/><circle cx="2" cy="17.2" r="1.85" fill="#111"/><circle cx="8" cy="17.2" r="1.85" fill="#111"/></svg>
<div class="a" style="left:222.90px;top:825.94px;width:30.00px;height:30.00px;background:#fff;border:2.2px solid #cdcdcd;border-radius:5px;box-sizing:border-box;"></div>
<div class="t" style="left:262.40px;top:832.22px;font-size:24px;line-height:24px;color:#1b1b1b;transform:scaleX(0.8593);">5.8</div>
<div class="a" style="left:398.50px;top:827.74px;width:30.10px;height:30.00px;background:#ed6e25;border-radius:4px;box-shadow:0 1px 2px rgba(0,0,0,.15);"></div>
<div class="t" style="left:437.40px;top:832.22px;font-size:24px;line-height:24px;color:#1b1b1b;transform:scaleX(0.9388);">Toiminnallinen vaatimus</div>
<div class="t" style="left:747.50px;top:832.22px;font-size:24px;line-height:24px;color:#1b1b1b;transform:scaleX(0.9189);">Laskujen maksatus ja maksujen hallinta</div>
<svg class="a" style="left:1399.20px;top:830.74px" width="20" height="18" viewBox="0 0 20 18"><path d="M6.2 3.6 V2.8 a2.2 2.2 0 0 1 2.2 -2.2 H15.6 a2.2 2.2 0 0 1 2.2 2.2 V14.4 a2.2 2.2 0 0 1 -2.2 2.2 H8.4 a2.2 2.2 0 0 1 -2.2 -2.2 V13.6" fill="none" stroke="#5b8fc9" stroke-width="1.6"/><path d="M0.8 8.6 H12.6 M9.2 5.2 L12.8 8.6 L9.2 12" fill="none" stroke="#5b8fc9" stroke-width="1.6" stroke-linecap="round" stroke-linejoin="round"/></svg>
<div class="a" style="left:1442.30px;top:827.64px;width:29.80px;height:30.10px;background:#b4ebfc;border-radius:4px;box-shadow:0 1px 2px rgba(0,0,0,.12);"></div>
<div class="t" style="left:1480.00px;top:832.02px;font-size:24px;line-height:24px;color:#1b1b1b;transform:scaleX(0.9382);">06 Määrittely valmis</div>
<div class="t" style="left:1750.70px;top:831.72px;font-size:24px;line-height:24px;color:#1b1b1b;transform:scaleX(0.8577);">Elina</div>
<svg class="a" style="left:116.30px;top:883.06px" width="10" height="20" viewBox="0 0 10 20"><circle cx="2" cy="2.0" r="1.85" fill="#111"/><circle cx="8" cy="2.0" r="1.85" fill="#111"/><circle cx="2" cy="9.6" r="1.85" fill="#111"/><circle cx="8" cy="9.6" r="1.85" fill="#111"/><circle cx="2" cy="17.2" r="1.85" fill="#111"/><circle cx="8" cy="17.2" r="1.85" fill="#111"/></svg>
<div class="a" style="left:222.90px;top:876.66px;width:30.00px;height:30.00px;background:#fff;border:2.2px solid #cdcdcd;border-radius:5px;box-sizing:border-box;"></div>
<div class="t" style="left:262.40px;top:882.94px;font-size:24px;line-height:24px;color:#1b1b1b;transform:scaleX(0.8593);">5.9</div>
<div class="a" style="left:398.50px;top:878.46px;width:30.10px;height:30.00px;background:#ed6e25;border-radius:4px;box-shadow:0 1px 2px rgba(0,0,0,.15);"></div>
<div class="t" style="left:437.40px;top:882.94px;font-size:24px;line-height:24px;color:#1b1b1b;transform:scaleX(0.9388);">Toiminnallinen vaatimus</div>
<div class="t" style="left:747.50px;top:882.94px;font-size:24px;line-height:24px;color:#1b1b1b;transform:scaleX(0.927);">Hyvityslaskujen käsittely</div>
<svg class="a" style="left:1399.20px;top:881.46px" width="20" height="18" viewBox="0 0 20 18"><path d="M6.2 3.6 V2.8 a2.2 2.2 0 0 1 2.2 -2.2 H15.6 a2.2 2.2 0 0 1 2.2 2.2 V14.4 a2.2 2.2 0 0 1 -2.2 2.2 H8.4 a2.2 2.2 0 0 1 -2.2 -2.2 V13.6" fill="none" stroke="#5b8fc9" stroke-width="1.6"/><path d="M0.8 8.6 H12.6 M9.2 5.2 L12.8 8.6 L9.2 12" fill="none" stroke="#5b8fc9" stroke-width="1.6" stroke-linecap="round" stroke-linejoin="round"/></svg>
<div class="a" style="left:1442.30px;top:878.36px;width:29.80px;height:30.10px;background:#b4ebfc;border-radius:4px;box-shadow:0 1px 2px rgba(0,0,0,.12);"></div>
<div class="t" style="left:1480.00px;top:882.74px;font-size:24px;line-height:24px;color:#1b1b1b;transform:scaleX(0.9382);">06 Määrittely valmis</div>
<div class="t" style="left:1750.70px;top:882.44px;font-size:24px;line-height:24px;color:#1b1b1b;transform:scaleX(0.8783);">Jyrki</div>
<svg class="a" style="left:116.30px;top:933.78px" width="10" height="20" viewBox="0 0 10 20"><circle cx="2" cy="2.0" r="1.85" fill="#111"/><circle cx="8" cy="2.0" r="1.85" fill="#111"/><circle cx="2" cy="9.6" r="1.85" fill="#111"/><circle cx="8" cy="9.6" r="1.85" fill="#111"/><circle cx="2" cy="17.2" r="1.85" fill="#111"/><circle cx="8" cy="17.2" r="1.85" fill="#111"/></svg>
<div class="a" style="left:222.90px;top:927.38px;width:30.00px;height:30.00px;background:#fff;border:2.2px solid #cdcdcd;border-radius:5px;box-sizing:border-box;"></div>
<div class="t" style="left:262.40px;top:933.66px;font-size:24px;line-height:24px;color:#1b1b1b;transform:scaleX(0.8758);">5.10</div>
<div class="a" style="left:398.50px;top:929.18px;width:30.10px;height:30.00px;background:#ed6e25;border-radius:4px;box-shadow:0 1px 2px rgba(0,0,0,.15);"></div>
<div class="t" style="left:437.40px;top:933.66px;font-size:24px;line-height:24px;color:#1b1b1b;transform:scaleX(0.9388);">Toiminnallinen vaatimus</div>
<div class="t" style="left:747.50px;top:933.66px;font-size:24px;line-height:24px;color:#1b1b1b;transform:scaleX(0.951);">Laskujen arkistointi ja hakutoiminnot</div>
<svg class="a" style="left:1399.20px;top:932.18px" width="20" height="18" viewBox="0 0 20 18"><path d="M6.2 3.6 V2.8 a2.2 2.2 0 0 1 2.2 -2.2 H15.6 a2.2 2.2 0 0 1 2.2 2.2 V14.4 a2.2 2.2 0 0 1 -2.2 2.2 H8.4 a2.2 2.2 0 0 1 -2.2 -2.2 V13.6" fill="none" stroke="#5b8fc9" stroke-width="1.6"/><path d="M0.8 8.6 H12.6 M9.2 5.2 L12.8 8.6 L9.2 12" fill="none" stroke="#5b8fc9" stroke-width="1.6" stroke-linecap="round" stroke-linejoin="round"/></svg>
<div class="a" style="left:1442.30px;top:929.08px;width:29.80px;height:30.10px;background:#b4ebfc;border-radius:4px;box-shadow:0 1px 2px rgba(0,0,0,.12);"></div>
<div class="t" style="left:1480.00px;top:933.46px;font-size:24px;line-height:24px;color:#1b1b1b;transform:scaleX(0.9382);">06 Määrittely valmis</div>
<div class="t" style="left:1750.70px;top:933.16px;font-size:24px;line-height:24px;color:#1b1b1b;transform:scaleX(0.8577);">Elina</div>
<svg class="a" style="left:116.30px;top:984.50px" width="10" height="20" viewBox="0 0 10 20"><circle cx="2" cy="2.0" r="1.85" fill="#111"/><circle cx="8" cy="2.0" r="1.85" fill="#111"/><circle cx="2" cy="9.6" r="1.85" fill="#111"/><circle cx="8" cy="9.6" r="1.85" fill="#111"/><circle cx="2" cy="17.2" r="1.85" fill="#111"/><circle cx="8" cy="17.2" r="1.85" fill="#111"/></svg>
<div class="a" style="left:222.90px;top:978.10px;width:30.00px;height:30.00px;background:#fff;border:2.2px solid #cdcdcd;border-radius:5px;box-sizing:border-box;"></div>
<div class="t" style="left:262.40px;top:984.38px;font-size:24px;line-height:24px;color:#1b1b1b;transform:scaleX(0.8641);">5.11</div>
<div class="a" style="left:398.50px;top:979.90px;width:30.10px;height:30.00px;background:#ed6e25;border-radius:4px;box-shadow:0 1px 2px rgba(0,0,0,.15);"></div>
<div class="t" style="left:437.40px;top:984.38px;font-size:24px;line-height:24px;color:#1b1b1b;transform:scaleX(0.9388);">Toiminnallinen vaatimus</div>
<div class="t" style="left:747.50px;top:984.38px;font-size:24px;line-height:24px;color:#1b1b1b;transform:scaleX(0.9435);">Raportointi ja analytiikka</div>
<svg class="a" style="left:1399.20px;top:982.90px" width="20" height="18" viewBox="0 0 20 18"><path d="M6.2 3.6 V2.8 a2.2 2.2 0 0 1 2.2 -2.2 H15.6 a2.2 2.2 0 0 1 2.2 2.2 V14.4 a2.2 2.2 0 0 1 -2.2 2.2 H8.4 a2.2 2.2 0 0 1 -2.2 -2.2 V13.6" fill="none" stroke="#5b8fc9" stroke-width="1.6"/><path d="M0.8 8.6 H12.6 M9.2 5.2 L12.8 8.6 L9.2 12" fill="none" stroke="#5b8fc9" stroke-width="1.6" stroke-linecap="round" stroke-linejoin="round"/></svg>
<div class="a" style="left:1442.30px;top:979.80px;width:29.80px;height:30.10px;background:#b4ebfc;border-radius:4px;box-shadow:0 1px 2px rgba(0,0,0,.12);"></div>
<div class="t" style="left:1480.00px;top:984.18px;font-size:24px;line-height:24px;color:#1b1b1b;transform:scaleX(0.9382);">06 Määrittely valmis</div>
<div class="t" style="left:1750.70px;top:983.88px;font-size:24px;line-height:24px;color:#1b1b1b;transform:scaleX(0.8577);">Elina</div>
<svg class="a" style="left:116.30px;top:1035.22px" width="10" height="20" viewBox="0 0 10 20"><circle cx="2" cy="2.0" r="1.85" fill="#111"/><circle cx="8" cy="2.0" r="1.85" fill="#111"/><circle cx="2" cy="9.6" r="1.85" fill="#111"/><circle cx="8" cy="9.6" r="1.85" fill="#111"/><circle cx="2" cy="17.2" r="1.85" fill="#111"/><circle cx="8" cy="17.2" r="1.85" fill="#111"/></svg>
<div class="a" style="left:222.90px;top:1028.82px;width:30.00px;height:30.00px;background:#fff;border:2.2px solid #cdcdcd;border-radius:5px;box-sizing:border-box;"></div>
<div class="t" style="left:262.40px;top:1035.10px;font-size:24px;line-height:24px;color:#1b1b1b;transform:scaleX(0.8758);">5.12</div>
<div class="a" style="left:398.50px;top:1030.62px;width:30.10px;height:30.00px;background:#ed6e25;border-radius:4px;box-shadow:0 1px 2px rgba(0,0,0,.15);"></div>
<div class="t" style="left:437.40px;top:1035.10px;font-size:24px;line-height:24px;color:#1b1b1b;transform:scaleX(0.9388);">Toiminnallinen vaatimus</div>
<div class="t" style="left:747.50px;top:1035.10px;font-size:24px;line-height:24px;color:#1b1b1b;transform:scaleX(0.9499);">Käyttäjien hallinta ja käyttöoikeudet</div>
<svg class="a" style="left:1399.20px;top:1033.62px" width="20" height="18" viewBox="0 0 20 18"><path d="M6.2 3.6 V2.8 a2.2 2.2 0 0 1 2.2 -2.2 H15.6 a2.2 2.2 0 0 1 2.2 2.2 V14.4 a2.2 2.2 0 0 1 -2.2 2.2 H8.4 a2.2 2.2 0 0 1 -2.2 -2.2 V13.6" fill="none" stroke="#5b8fc9" stroke-width="1.6"/><path d="M0.8 8.6 H12.6 M9.2 5.2 L12.8 8.6 L9.2 12" fill="none" stroke="#5b8fc9" stroke-width="1.6" stroke-linecap="round" stroke-linejoin="round"/></svg>
<div class="a" style="left:1442.30px;top:1030.52px;width:29.80px;height:30.10px;background:#b4ebfc;border-radius:4px;box-shadow:0 1px 2px rgba(0,0,0,.12);"></div>
<div class="t" style="left:1480.00px;top:1034.90px;font-size:24px;line-height:24px;color:#1b1b1b;transform:scaleX(0.9382);">06 Määrittely valmis</div>
<div class="t" style="left:1750.70px;top:1034.60px;font-size:24px;line-height:24px;color:#1b1b1b;transform:scaleX(0.8783);">Jyrki</div>
<svg class="a" style="left:116.30px;top:1085.94px" width="10" height="20" viewBox="0 0 10 20"><circle cx="2" cy="2.0" r="1.85" fill="#111"/><circle cx="8" cy="2.0" r="1.85" fill="#111"/><circle cx="2" cy="9.6" r="1.85" fill="#111"/><circle cx="8" cy="9.6" r="1.85" fill="#111"/><circle cx="2" cy="17.2" r="1.85" fill="#111"/><circle cx="8" cy="17.2" r="1.85" fill="#111"/></svg>
<div class="a" style="left:222.90px;top:1079.54px;width:30.00px;height:30.00px;background:#fff;border:2.2px solid #cdcdcd;border-radius:5px;box-sizing:border-box;"></div>
<div class="t" style="left:262.40px;top:1085.82px;font-size:24px;line-height:24px;color:#1b1b1b;transform:scaleX(0.8758);">5.13</div>
<div class="a" style="left:398.50px;top:1081.34px;width:30.10px;height:30.00px;background:#ed6e25;border-radius:4px;box-shadow:0 1px 2px rgba(0,0,0,.15);"></div>
<div class="t" style="left:437.40px;top:1085.82px;font-size:24px;line-height:24px;color:#1b1b1b;transform:scaleX(0.9388);">Toiminnallinen vaatimus</div>
<div class="t" style="left:747.50px;top:1085.82px;font-size:24px;line-height:24px;color:#1b1b1b;transform:scaleX(0.9405);">Integraatiot toiminnanohjausjärjestelmän ja pankin kanssa</div>
<svg class="a" style="left:1399.20px;top:1084.34px" width="20" height="18" viewBox="0 0 20 18"><path d="M6.2 3.6 V2.8 a2.2 2.2 0 0 1 2.2 -2.2 H15.6 a2.2 2.2 0 0 1 2.2 2.2 V14.4 a2.2 2.2 0 0 1 -2.2 2.2 H8.4 a2.2 2.2 0 0 1 -2.2 -2.2 V13.6" fill="none" stroke="#5b8fc9" stroke-width="1.6"/><path d="M0.8 8.6 H12.6 M9.2 5.2 L12.8 8.6 L9.2 12" fill="none" stroke="#5b8fc9" stroke-width="1.6" stroke-linecap="round" stroke-linejoin="round"/></svg>
<div class="a" style="left:1442.30px;top:1081.24px;width:29.80px;height:30.10px;background:#b4ebfc;border-radius:4px;box-shadow:0 1px 2px rgba(0,0,0,.12);"></div>
<div class="t" style="left:1480.00px;top:1085.62px;font-size:24px;line-height:24px;color:#1b1b1b;transform:scaleX(0.9382);">06 Määrittely valmis</div>
<div class="t" style="left:1750.70px;top:1085.32px;font-size:24px;line-height:24px;color:#1b1b1b;transform:scaleX(0.8577);">Elina</div>
<svg class="a" style="left:116.30px;top:1136.66px" width="10" height="20" viewBox="0 0 10 20"><circle cx="2" cy="2.0" r="1.85" fill="#111"/><circle cx="8" cy="2.0" r="1.85" fill="#111"/><circle cx="2" cy="9.6" r="1.85" fill="#111"/><circle cx="8" cy="9.6" r="1.85" fill="#111"/><circle cx="2" cy="17.2" r="1.85" fill="#111"/><circle cx="8" cy="17.2" r="1.85" fill="#111"/></svg>
<div class="a" style="left:222.90px;top:1130.26px;width:30.00px;height:30.00px;background:#fff;border:2.2px solid #cdcdcd;border-radius:5px;box-sizing:border-box;"></div>
<div class="t" style="left:262.40px;top:1136.54px;font-size:24px;line-height:24px;color:#1b1b1b;transform:scaleX(0.8758);">5.14</div>
<div class="a" style="left:398.50px;top:1132.06px;width:30.10px;height:30.00px;background:#ed6e25;border-radius:4px;box-shadow:0 1px 2px rgba(0,0,0,.15);"></div>
<div class="t" style="left:437.40px;top:1136.54px;font-size:24px;line-height:24px;color:#1b1b1b;transform:scaleX(0.9388);">Toiminnallinen vaatimus</div>
<div class="t" style="left:747.50px;top:1136.54px;font-size:24px;line-height:24px;color:#1b1b1b;transform:scaleX(0.961);">Toimittajatietojen hallinta</div>
<svg class="a" style="left:1399.20px;top:1135.06px" width="20" height="18" viewBox="0 0 20 18"><path d="M6.2 3.6 V2.8 a2.2 2.2 0 0 1 2.2 -2.2 H15.6 a2.2 2.2 0 0 1 2.2 2.2 V14.4 a2.2 2.2 0 0 1 -2.2 2.2 H8.4 a2.2 2.2 0 0 1 -2.2 -2.2 V13.6" fill="none" stroke="#5b8fc9" stroke-width="1.6"/><path d="M0.8 8.6 H12.6 M9.2 5.2 L12.8 8.6 L9.2 12" fill="none" stroke="#5b8fc9" stroke-width="1.6" stroke-linecap="round" stroke-linejoin="round"/></svg>
<div class="a" style="left:1442.30px;top:1131.96px;width:29.80px;height:30.10px;background:#b4ebfc;border-radius:4px;box-shadow:0 1px 2px rgba(0,0,0,.12);"></div>
<div class="t" style="left:1480.00px;top:1136.34px;font-size:24px;line-height:24px;color:#1b1b1b;transform:scaleX(0.9382);">06 Määrittely valmis</div>
<div class="t" style="left:1750.70px;top:1136.04px;font-size:24px;line-height:24px;color:#1b1b1b;transform:scaleX(0.8783);">Jyrki</div>
<svg class="a" style="left:116.30px;top:1187.38px" width="10" height="20" viewBox="0 0 10 20"><circle cx="2" cy="2.0" r="1.85" fill="#111"/><circle cx="8" cy="2.0" r="1.85" fill="#111"/><circle cx="2" cy="9.6" r="1.85" fill="#111"/><circle cx="8" cy="9.6" r="1.85" fill="#111"/><circle cx="2" cy="17.2" r="1.85" fill="#111"/><circle cx="8" cy="17.2" r="1.85" fill="#111"/></svg>
<div class="a" style="left:222.90px;top:1180.98px;width:30.00px;height:30.00px;background:#fff;border:2.2px solid #cdcdcd;border-radius:5px;box-sizing:border-box;"></div>
<div class="t" style="left:262.40px;top:1187.26px;font-size:24px;line-height:24px;color:#1b1b1b;transform:scaleX(0.8758);">5.15</div>
<div class="a" style="left:398.50px;top:1182.78px;width:30.10px;height:30.00px;background:#ed6e25;border-radius:4px;box-shadow:0 1px 2px rgba(0,0,0,.15);"></div>
<div class="t" style="left:437.40px;top:1187.26px;font-size:24px;line-height:24px;color:#1b1b1b;transform:scaleX(0.9388);">Toiminnallinen vaatimus</div>
<div class="t" style="left:747.50px;top:1187.26px;font-size:24px;line-height:24px;color:#1b1b1b;transform:scaleX(0.9515);">Viestintä ja ilmoitukset</div>
<svg class="a" style="left:1399.20px;top:1185.78px" width="20" height="18" viewBox="0 0 20 18"><path d="M6.2 3.6 V2.8 a2.2 2.2 0 0 1 2.2 -2.2 H15.6 a2.2 2.2 0 0 1 2.2 2.2 V14.4 a2.2 2.2 0 0 1 -2.2 2.2 H8.4 a2.2 2.2 0 0 1 -2.2 -2.2 V13.6" fill="none" stroke="#5b8fc9" stroke-width="1.6"/><path d="M0.8 8.6 H12.6 M9.2 5.2 L12.8 8.6 L9.2 12" fill="none" stroke="#5b8fc9" stroke-width="1.6" stroke-linecap="round" stroke-linejoin="round"/></svg>
<div class="a" style="left:1442.30px;top:1182.68px;width:29.80px;height:30.10px;background:#b4ebfc;border-radius:4px;box-shadow:0 1px 2px rgba(0,0,0,.12);"></div>
<div class="t" style="left:1480.00px;top:1187.06px;font-size:24px;line-height:24px;color:#1b1b1b;transform:scaleX(0.9382);">06 Määrittely valmis</div>
<div class="t" style="left:1750.70px;top:1186.76px;font-size:24px;line-height:24px;color:#1b1b1b;transform:scaleX(0.8577);">Elina</div>
<svg class="a" style="left:116.30px;top:1238.10px" width="10" height="20" viewBox="0 0 10 20"><circle cx="2" cy="2.0" r="1.85" fill="#111"/><circle cx="8" cy="2.0" r="1.85" fill="#111"/><circle cx="2" cy="9.6" r="1.85" fill="#111"/><circle cx="8" cy="9.6" r="1.85" fill="#111"/><circle cx="2" cy="17.2" r="1.85" fill="#111"/><circle cx="8" cy="17.2" r="1.85" fill="#111"/></svg>
<div class="a" style="left:222.90px;top:1231.70px;width:30.00px;height:30.00px;background:#fff;border:2.2px solid #cdcdcd;border-radius:5px;box-sizing:border-box;"></div>
<div class="t" style="left:262.40px;top:1237.98px;font-size:24px;line-height:24px;color:#1b1b1b;transform:scaleX(0.8758);">5.16</div>
<div class="a" style="left:398.50px;top:1233.50px;width:30.10px;height:30.00px;background:#ed6e25;border-radius:4px;box-shadow:0 1px 2px rgba(0,0,0,.15);"></div>
<div class="t" style="left:437.40px;top:1237.98px;font-size:24px;line-height:24px;color:#1b1b1b;transform:scaleX(0.9388);">Toiminnallinen vaatimus</div>
<div class="t" style="left:747.50px;top:1237.98px;font-size:24px;line-height:24px;color:#1b1b1b;transform:scaleX(0.9639);">Auditointi ja tapahtumahistoria</div>
<svg class="a" style="left:1399.20px;top:1236.50px" width="20" height="18" viewBox="0 0 20 18"><path d="M6.2 3.6 V2.8 a2.2 2.2 0 0 1 2.2 -2.2 H15.6 a2.2 2.2 0 0 1 2.2 2.2 V14.4 a2.2 2.2 0 0 1 -2.2 2.2 H8.4 a2.2 2.2 0 0 1 -2.2 -2.2 V13.6" fill="none" stroke="#5b8fc9" stroke-width="1.6"/><path d="M0.8 8.6 H12.6 M9.2 5.2 L12.8 8.6 L9.2 12" fill="none" stroke="#5b8fc9" stroke-width="1.6" stroke-linecap="round" stroke-linejoin="round"/></svg>
<div class="a" style="left:1442.30px;top:1233.40px;width:29.80px;height:30.10px;background:#b4ebfc;border-radius:4px;box-shadow:0 1px 2px rgba(0,0,0,.12);"></div>
<div class="t" style="left:1480.00px;top:1237.78px;font-size:24px;line-height:24px;color:#1b1b1b;transform:scaleX(0.9382);">06 Määrittely valmis</div>
<div class="t" style="left:1750.70px;top:1237.48px;font-size:24px;line-height:24px;color:#1b1b1b;transform:scaleX(0.9166);">Annukka</div>
<svg class="a" style="left:116.30px;top:1288.82px" width="10" height="20" viewBox="0 0 10 20"><circle cx="2" cy="2.0" r="1.85" fill="#111"/><circle cx="8" cy="2.0" r="1.85" fill="#111"/><circle cx="2" cy="9.6" r="1.85" fill="#111"/><circle cx="8" cy="9.6" r="1.85" fill="#111"/><circle cx="2" cy="17.2" r="1.85" fill="#111"/><circle cx="8" cy="17.2" r="1.85" fill="#111"/></svg>
<div class="a" style="left:222.90px;top:1282.42px;width:30.00px;height:30.00px;background:#fff;border:2.2px solid #cdcdcd;border-radius:5px;box-sizing:border-box;"></div>
<div class="t" style="left:262.40px;top:1288.70px;font-size:24px;line-height:24px;color:#1b1b1b;transform:scaleX(0.8758);">5.17</div>
<div class="a" style="left:398.50px;top:1284.22px;width:30.10px;height:30.00px;background:#ed6e25;border-radius:4px;box-shadow:0 1px 2px rgba(0,0,0,.15);"></div>
<div class="t" style="left:437.40px;top:1288.70px;font-size:24px;line-height:24px;color:#1b1b1b;transform:scaleX(0.9388);">Toiminnallinen vaatimus</div>
<div class="t" style="left:747.50px;top:1288.70px;font-size:24px;line-height:24px;color:#1b1b1b;transform:scaleX(0.9165);">Tietoturva ja salaus</div>
<svg class="a" style="left:1399.20px;top:1287.22px" width="20" height="18" viewBox="0 0 20 18"><path d="M6.2 3.6 V2.8 a2.2 2.2 0 0 1 2.2 -2.2 H15.6 a2.2 2.2 0 0 1 2.2 2.2 V14.4 a2.2 2.2 0 0 1 -2.2 2.2 H8.4 a2.2 2.2 0 0 1 -2.2 -2.2 V13.6" fill="none" stroke="#5b8fc9" stroke-width="1.6"/><path d="M0.8 8.6 H12.6 M9.2 5.2 L12.8 8.6 L9.2 12" fill="none" stroke="#5b8fc9" stroke-width="1.6" stroke-linecap="round" stroke-linejoin="round"/></svg>
<div class="a" style="left:1442.30px;top:1284.12px;width:29.80px;height:30.10px;background:#b4ebfc;border-radius:4px;box-shadow:0 1px 2px rgba(0,0,0,.12);"></div>
<div class="t" style="left:1480.00px;top:1288.50px;font-size:24px;line-height:24px;color:#1b1b1b;transform:scaleX(0.9382);">06 Määrittely valmis</div>
<div class="t" style="left:1750.70px;top:1288.20px;font-size:24px;line-height:24px;color:#1b1b1b;transform:scaleX(0.9166);">Annukka</div>
<svg class="a" style="left:116.30px;top:1339.54px" width="10" height="20" viewBox="0 0 10 20"><circle cx="2" cy="2.0" r="1.85" fill="#111"/><circle cx="8" cy="2.0" r="1.85" fill="#111"/><circle cx="2" cy="9.6" r="1.85" fill="#111"/><circle cx="8" cy="9.6" r="1.85" fill="#111"/><circle cx="2" cy="17.2" r="1.85" fill="#111"/><circle cx="8" cy="17.2" r="1.85" fill="#111"/></svg>
<div class="a" style="left:222.90px;top:1333.14px;width:30.00px;height:30.00px;background:#fff;border:2.2px solid #cdcdcd;border-radius:5px;box-sizing:border-box;"></div>
<div class="t" style="left:262.40px;top:1339.42px;font-size:24px;line-height:24px;color:#1b1b1b;transform:scaleX(0.8758);">5.18</div>
<div class="a" style="left:398.50px;top:1334.94px;width:30.10px;height:30.00px;background:#ed6e25;border-radius:4px;box-shadow:0 1px 2px rgba(0,0,0,.15);"></div>
<div class="t" style="left:437.40px;top:1339.42px;font-size:24px;line-height:24px;color:#1b1b1b;transform:scaleX(0.9388);">Toiminnallinen vaatimus</div>
<div class="t" style="left:747.50px;top:1339.42px;font-size:24px;line-height:24px;color:#1b1b1b;transform:scaleX(0.958);">Käyttöliittymän personointi ja mukautus</div>
<svg class="a" style="left:1399.20px;top:1337.94px" width="20" height="18" viewBox="0 0 20 18"><path d="M6.2 3.6 V2.8 a2.2 2.2 0 0 1 2.2 -2.2 H15.6 a2.2 2.2 0 0 1 2.2 2.2 V14.4 a2.2 2.2 0 0 1 -2.2 2.2 H8.4 a2.2 2.2 0 0 1 -2.2 -2.2 V13.6" fill="none" stroke="#5b8fc9" stroke-width="1.6"/><path d="M0.8 8.6 H12.6 M9.2 5.2 L12.8 8.6 L9.2 12" fill="none" stroke="#5b8fc9" stroke-width="1.6" stroke-linecap="round" stroke-linejoin="round"/></svg>
<div class="a" style="left:1442.30px;top:1334.84px;width:29.80px;height:30.10px;background:#b4ebfc;border-radius:4px;box-shadow:0 1px 2px rgba(0,0,0,.12);"></div>
<div class="t" style="left:1480.00px;top:1339.22px;font-size:24px;line-height:24px;color:#1b1b1b;transform:scaleX(0.9382);">06 Määrittely valmis</div>
<div class="t" style="left:1750.70px;top:1338.92px;font-size:24px;line-height:24px;color:#1b1b1b;transform:scaleX(0.9166);">Annukka</div>
<svg class="a" style="left:116.30px;top:1390.26px" width="10" height="20" viewBox="0 0 10 20"><circle cx="2" cy="2.0" r="1.85" fill="#111"/><circle cx="8" cy="2.0" r="1.85" fill="#111"/><circle cx="2" cy="9.6" r="1.85" fill="#111"/><circle cx="8" cy="9.6" r="1.85" fill="#111"/><circle cx="2" cy="17.2" r="1.85" fill="#111"/><circle cx="8" cy="17.2" r="1.85" fill="#111"/></svg>
<div class="a" style="left:222.90px;top:1383.86px;width:30.00px;height:30.00px;background:#fff;border:2.2px solid #cdcdcd;border-radius:5px;box-sizing:border-box;"></div>
<div class="t" style="left:262.40px;top:1390.14px;font-size:24px;line-height:24px;color:#1b1b1b;transform:scaleX(0.8758);">5.19</div>
<div class="a" style="left:398.50px;top:1385.66px;width:30.10px;height:30.00px;background:#ed6e25;border-radius:4px;box-shadow:0 1px 2px rgba(0,0,0,.15);"></div>
<div class="t" style="left:437.40px;top:1390.14px;font-size:24px;line-height:24px;color:#1b1b1b;transform:scaleX(0.9388);">Toiminnallinen vaatimus</div>
<div class="t" style="left:747.50px;top:1390.14px;font-size:24px;line-height:24px;color:#1b1b1b;transform:scaleX(0.9398);">Koulutus ja tuki</div>
<svg class="a" style="left:1399.20px;top:1388.66px" width="20" height="18" viewBox="0 0 20 18"><path d="M6.2 3.6 V2.8 a2.2 2.2 0 0 1 2.2 -2.2 H15.6 a2.2 2.2 0 0 1 2.2 2.2 V14.4 a2.2 2.2 0 0 1 -2.2 2.2 H8.4 a2.2 2.2 0 0 1 -2.2 -2.2 V13.6" fill="none" stroke="#5b8fc9" stroke-width="1.6"/><path d="M0.8 8.6 H12.6 M9.2 5.2 L12.8 8.6 L9.2 12" fill="none" stroke="#5b8fc9" stroke-width="1.6" stroke-linecap="round" stroke-linejoin="round"/></svg>
<div class="a" style="left:1442.30px;top:1385.56px;width:29.80px;height:30.10px;background:#b4ebfc;border-radius:4px;box-shadow:0 1px 2px rgba(0,0,0,.12);"></div>
<div class="t" style="left:1480.00px;top:1389.94px;font-size:24px;line-height:24px;color:#1b1b1b;transform:scaleX(0.9382);">06 Määrittely valmis</div>
<div class="t" style="left:1750.70px;top:1389.64px;font-size:24px;line-height:24px;color:#1b1b1b;transform:scaleX(0.9166);">Annukka</div>
<svg class="a" style="left:116.30px;top:1440.98px" width="10" height="20" viewBox="0 0 10 20"><circle cx="2" cy="2.0" r="1.85" fill="#111"/><circle cx="8" cy="2.0" r="1.85" fill="#111"/><circle cx="2" cy="9.6" r="1.85" fill="#111"/><circle cx="8" cy="9.6" r="1.85" fill="#111"/><circle cx="2" cy="17.2" r="1.85" fill="#111"/><circle cx="8" cy="17.2" r="1.85" fill="#111"/></svg>
<div class="a" style="left:222.90px;top:1434.58px;width:30.00px;height:30.00px;background:#fff;border:2.2px solid #cdcdcd;border-radius:5px;box-sizing:border-box;"></div>
<div class="t" style="left:262.40px;top:1440.86px;font-size:24px;line-height:24px;color:#1b1b1b;transform:scaleX(0.8758);">5.20</div>
<div class="a" style="left:398.50px;top:1436.38px;width:30.10px;height:30.00px;background:#ed6e25;border-radius:4px;box-shadow:0 1px 2px rgba(0,0,0,.15);"></div>
<div class="t" style="left:437.40px;top:1440.86px;font-size:24px;line-height:24px;color:#1b1b1b;transform:scaleX(0.9388);">Toiminnallinen vaatimus</div>
<div class="t" style="left:747.50px;top:1440.86px;font-size:24px;line-height:24px;color:#1b1b1b;transform:scaleX(0.9385);">Ylläpito ja päivitykset</div>
<svg class="a" style="left:1399.20px;top:1439.38px" width="20" height="18" viewBox="0 0 20 18"><path d="M6.2 3.6 V2.8 a2.2 2.2 0 0 1 2.2 -2.2 H15.6 a2.2 2.2 0 0 1 2.2 2.2 V14.4 a2.2 2.2 0 0 1 -2.2 2.2 H8.4 a2.2 2.2 0 0 1 -2.2 -2.2 V13.6" fill="none" stroke="#5b8fc9" stroke-width="1.6"/><path d="M0.8 8.6 H12.6 M9.2 5.2 L12.8 8.6 L9.2 12" fill="none" stroke="#5b8fc9" stroke-width="1.6" stroke-linecap="round" stroke-linejoin="round"/></svg>
<div class="a" style="left:1442.30px;top:1436.28px;width:29.80px;height:30.10px;background:#b4ebfc;border-radius:4px;box-shadow:0 1px 2px rgba(0,0,0,.12);"></div>
<div class="t" style="left:1480.00px;top:1440.66px;font-size:24px;line-height:24px;color:#1b1b1b;transform:scaleX(0.9382);">06 Määrittely valmis</div>
<div class="t" style="left:1750.70px;top:1440.36px;font-size:24px;line-height:24px;color:#1b1b1b;transform:scaleX(0.9166);">Annukka</div>
</body></html>
